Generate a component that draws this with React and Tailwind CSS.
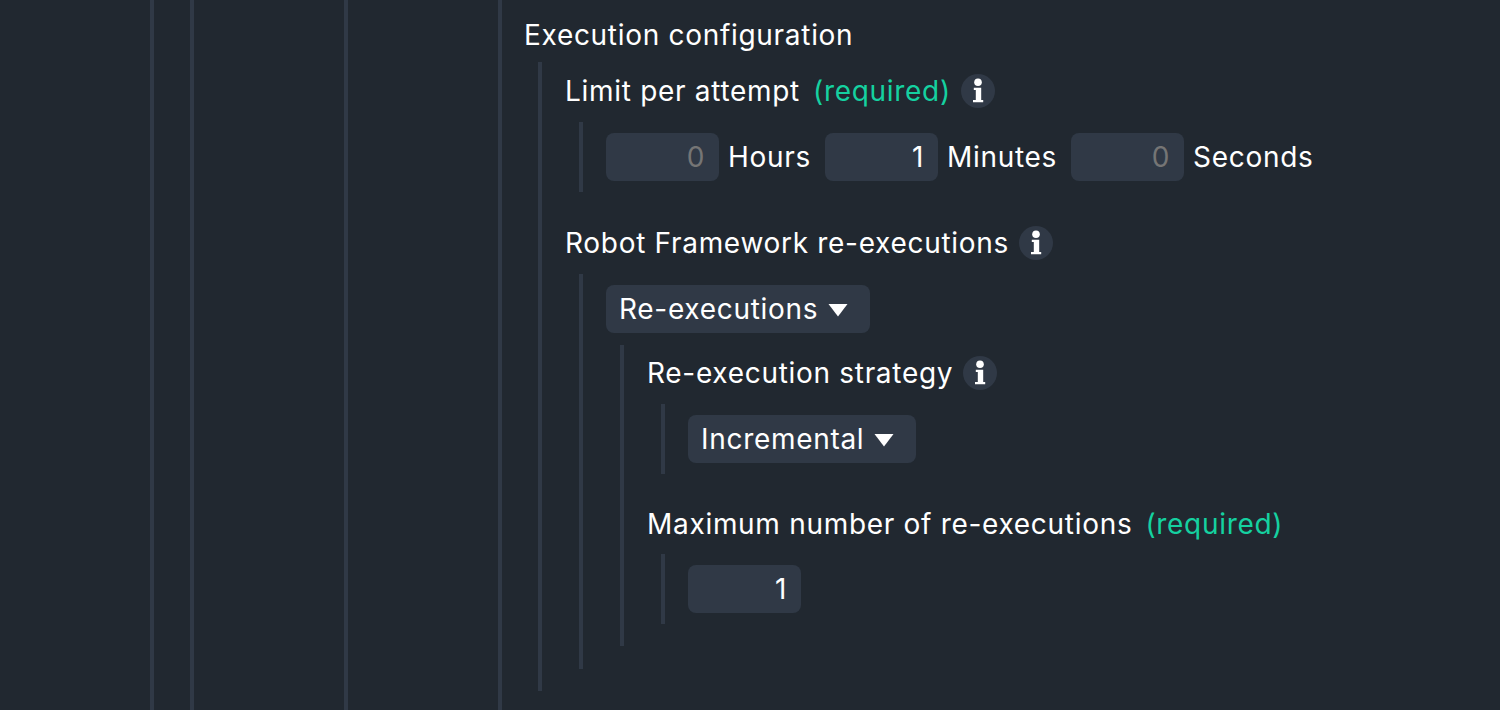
import { useState } from 'react';

function InfoButton({ topic }) {
  return (
    <button type="button" aria-label={`Help: ${topic}`} className="size-[34px] shrink-0 rounded-full bg-[#303946] text-white">
      <svg viewBox="0 0 34 34" className="size-full" fill="currentColor" aria-hidden="true">
        <circle cx="17" cy="8.3" r="3.8" />
        <path d="M12.8 13.8H20.2V26H22.2V28.2H12V26H14.8V16H12.8Z" />
      </svg>
    </button>
  );
}

function FieldLabel({ htmlFor, children, required, info }) {
  return (
    <div className="flex items-center gap-[10px]">
      <label htmlFor={htmlFor}>
        {children}
        {required ? <span className="ml-[13px] text-[#15d1a0]">(required)</span> : null}
      </label>
      {info ? <InfoButton topic={children} /> : null}
    </div>
  );
}

function Indent({ className, children }) {
  return <div className={`ml-[14px] border-l-4 border-[#303946] pl-[23px] ${className}`}>{children}</div>;
}

function NumberInput({ id, value, onChange }) {
  return (
    <input
      id={id}
      type="text"
      inputMode="numeric"
      placeholder="0"
      value={value}
      onChange={e => onChange(e.target.value)}
      className="h-12 w-[113px] rounded-lg bg-[#303946] px-[14px] text-right tracking-wide text-white outline-none placeholder:text-[#757575]"
    />
  );
}

function Dropdown({ id, className, value, onChange, options }) {
  return (
    <div className={`relative ${className}`}>
      <select
        id={id}
        value={value}
        onChange={e => onChange(e.target.value)}
        className="h-12 w-full appearance-none rounded-lg bg-[#303946] pl-[13px] tracking-wide text-white outline-none"
      >
        {options.map(option => <option key={option}>{option}</option>)}
      </select>
      <svg viewBox="0 0 20 13" className="pointer-events-none absolute top-[19px] right-[22px] h-[13px] w-5" fill="white" aria-hidden="true">
        <path d="M0.5 0H19.5L10 12.5Z" />
      </svg>
    </div>
  );
}

export default function App() {
  const [limit, setLimit] = useState({ hours: '', minutes: '1', seconds: '' });
  const [mode, setMode] = useState('Re-executions');
  const [strategy, setStrategy] = useState('Incremental');
  const [maximum, setMaximum] = useState('1');

  return (
    <div className="flex min-h-screen bg-[#212830] pl-[150px] font-['Inter',sans-serif] text-[28px] leading-8 tracking-wide text-white">
      <div className="flex grow border-l-4 border-[#303946] pl-9">
        <div className="flex grow border-l-4 border-[#303946] pl-[150px]">
          <div className="flex grow border-l-4 border-[#303946] pl-[150px]">
            <main className="grow border-l-4 border-[#303946] pt-[19px] pl-[22px]">
              <h2>Execution configuration</h2>

              <Indent className="mt-[11px] pt-3 pb-[22px]">
                <FieldLabel htmlFor="limit-hours" required info>Limit per attempt</FieldLabel>
                <Indent className="mt-[14px] py-[11px]">
                  <div className="flex flex-wrap gap-[14px]">
                    {[['hours', 'Hours'], ['minutes', 'Minutes'], ['seconds', 'Seconds']].map(([unit, name]) => (
                      <div key={unit} className="flex items-center gap-[9px]">
                        <NumberInput id={`limit-${unit}`} value={limit[unit]} onChange={value => setLimit({ ...limit, [unit]: value })} />
                        <label htmlFor={`limit-${unit}`}>{name}</label>
                      </div>
                    ))}
                  </div>
                </Indent>

                <div className="mt-[34px]">
                  <FieldLabel htmlFor="mode" info>Robot Framework re-executions</FieldLabel>
                </div>
                <Indent className="mt-[14px] pt-[11px] pb-[23px]">
                  <Dropdown id="mode" className="w-[264px]" value={mode} onChange={setMode} options={['Re-executions', 'No re-executions']} />
                  <Indent className="mt-3 pt-[11px] pb-[22px]">
                    <FieldLabel htmlFor="strategy" info>Re-execution strategy</FieldLabel>
                    <Indent className="mt-[14px] py-[11px]">
                      <Dropdown id="strategy" className="w-[228px]" value={strategy} onChange={setStrategy} options={['Incremental', 'Complete']} />
                    </Indent>

                    <div className="mt-[34px]">
                      <FieldLabel htmlFor="maximum" required>Maximum number of re-executions</FieldLabel>
                    </div>
                    <Indent className="mt-[14px] flex py-[11px]">
                      <NumberInput id="maximum" value={maximum} onChange={setMaximum} />
                    </Indent>
                  </Indent>
                </Indent>
              </Indent>
            </main>
          </div>
        </div>
      </div>
    </div>
  );
}
